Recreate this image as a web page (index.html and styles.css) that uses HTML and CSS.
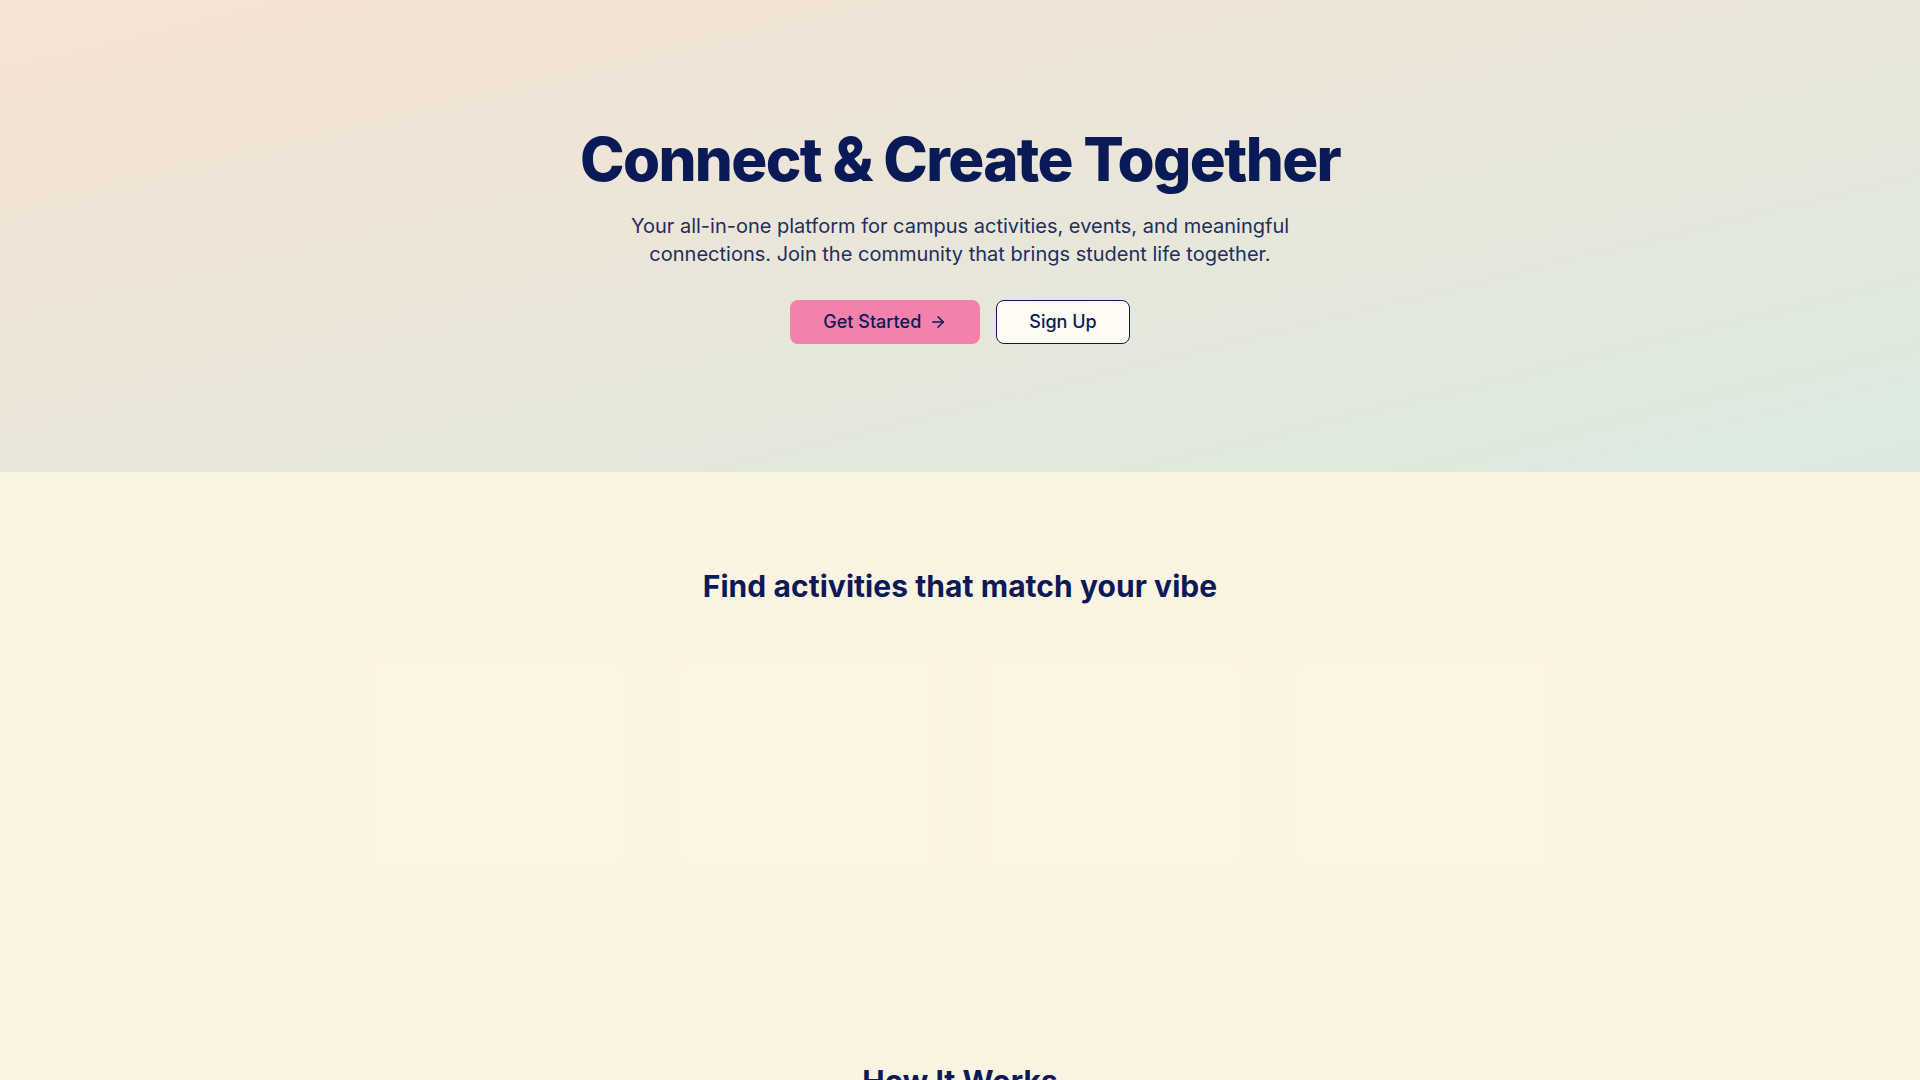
FILE: index.html
```html
<!DOCTYPE html>
<html lang="en">
<head>
    <meta charset="UTF-8">
    <meta name="viewport" content="width=device-width, initial-scale=1.0">
    <title>Connect & Create Together</title>
    <link rel="stylesheet" href="styles.css">
</head>
<body>
    <section class="hero">
        <h1 class="hero-title">Connect &amp; Create Together</h1>
        <p class="hero-text">Your all-in-one platform for campus activities, events, and meaningful connections. Join the community that brings student life together.</p>
        <div class="hero-actions">
            <a href="#" class="btn btn-primary">
                Get Started
                <svg class="btn-icon" viewBox="0 0 24 24" fill="none" stroke="currentColor" stroke-width="2" stroke-linecap="round" stroke-linejoin="round"><path d="M5 12h14"/><path d="m12 5 7 7-7 7"/></svg>
            </a>
            <a href="#" class="btn btn-outline">Sign Up</a>
        </div>
    </section>

    <section class="section">
        <h2 class="section-title">Find activities that match your vibe</h2>
        <div class="cards">
            <div class="card"></div>
            <div class="card"></div>
            <div class="card"></div>
            <div class="card"></div>
        </div>
    </section>

    <section class="section section-next">
        <h2 class="section-title">How It Works</h2>
    </section>
</body>
</html>
```

FILE: styles.css
```css
* {
    box-sizing: border-box;
}
body {
    margin: 0;
    font-family: Inter, "Noto Sans", sans-serif;
    background-color: #fcf4e3;
    color: #0a1a56;
}
.hero {
    padding: 128px 24px;
    text-align: center;
    background: linear-gradient(to bottom right, #f7e3d3, #e9e6d9 50%, #dbebe1);
}
.hero-title {
    margin: 0 0 22px;
    font-size: 60px;
    line-height: 62px;
    font-weight: 800;
    letter-spacing: -1.65px;
    color: #0a1a56;
}
.hero-text {
    max-width: 672px;
    margin: 0 auto 32px;
    font-size: 20px;
    line-height: 28px;
    color: #222d5f;
}
.hero-actions {
    display: flex;
    justify-content: center;
    gap: 16px;
}
.btn {
    display: inline-flex;
    align-items: center;
    gap: 8px;
    padding: 7px 32px;
    font-size: 18px;
    line-height: 28px;
    font-weight: 500;
    color: #0a1a56;
    text-decoration: none;
    border-radius: 8px;
    border: 1px solid transparent;
}
.btn-primary {
    background-color: #f481ac;
}
.btn-outline {
    background-color: #fffcf5;
    border-color: #0a1a56;
}
.btn-icon {
    width: 18px;
    height: 18px;
}
.section {
    padding: 96px 24px;
    text-align: center;
}
.section-next {
    padding-top: 100px;
}
.section-title {
    margin: 0;
    font-size: 30px;
    line-height: 36px;
    font-weight: 700;
    letter-spacing: 0.05px;
    color: #0a1a56;
}
.cards {
    display: grid;
    grid-template-columns: repeat(4, 1fr);
    gap: 48px;
    max-width: 1184px;
    margin: 57px auto 0;
}
.card {
    height: 206px;
    border-radius: 16px;
    border: 1px solid rgba(255, 240, 220, 0.5);
    background-color: rgba(253, 245, 228, 0.6);
    box-shadow: 0 0 12px rgba(250, 232, 205, 0.18);
}
```
